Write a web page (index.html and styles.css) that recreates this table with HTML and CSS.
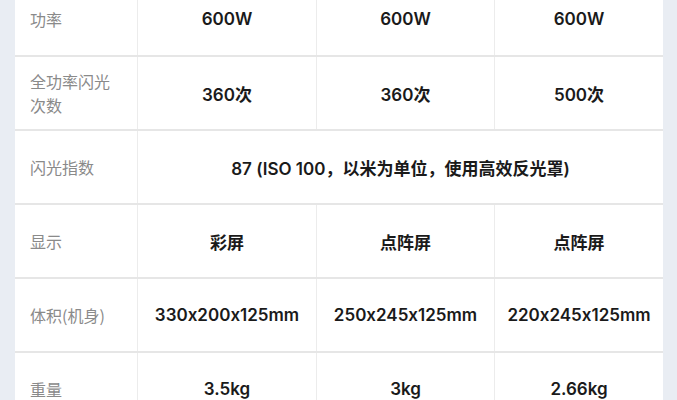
FILE: index.html
```html
<!DOCTYPE html>
<html lang="zh-CN">
<head>
<meta charset="utf-8">
<link rel="stylesheet" href="styles.css">
</head>
<body>
<div class="page">
  <div class="card">
    <div class="row">
      <div class="cell label">功率</div>
      <div class="cell val">600W</div>
      <div class="cell val">600W</div>
      <div class="cell val last">600W</div>
    </div>
    <div class="row">
      <div class="cell label">全功率闪光<br>次数</div>
      <div class="cell val">360次</div>
      <div class="cell val">360次</div>
      <div class="cell val last">500次</div>
    </div>
    <div class="row">
      <div class="cell label">闪光指数</div>
      <div class="cell val span3 last">87 (ISO 100，以米为单位，使用高效反光罩)</div>
    </div>
    <div class="row">
      <div class="cell label">显示</div>
      <div class="cell val">彩屏</div>
      <div class="cell val">点阵屏</div>
      <div class="cell val last">点阵屏</div>
    </div>
    <div class="row">
      <div class="cell label">体积(机身)</div>
      <div class="cell val">330x200x125mm</div>
      <div class="cell val">250x245x125mm</div>
      <div class="cell val last">220x245x125mm</div>
    </div>
    <div class="row">
      <div class="cell label">重量</div>
      <div class="cell val">3.5kg</div>
      <div class="cell val">3kg</div>
      <div class="cell val last">2.66kg</div>
    </div>
  </div>
</div>
</body>
</html>
```
FILE: styles.css
```css
html, body {
  margin: 0;
  padding: 0;
  background: #e9edf3;
  overflow: hidden;
}
.page {
  width: 677px;
  height: 400px;
  overflow: hidden;
  padding: 0 14px 0 15px;
  box-sizing: border-box;
}
.card {
  background: #ffffff;
  margin-top: -17px;
  font-family: Inter, "Noto Sans CJK SC", sans-serif;
  font-feature-settings: "calt" 0;
}
.row {
  display: grid;
  grid-template-columns: 123px 179px 178px 168px;
  height: 74px;
  border-bottom: 2px solid #e6e6e6;
  box-sizing: border-box;
}
.cell {
  display: flex;
  align-items: center;
  border-right: 1px solid #ececec;
}
.cell.last {
  border-right: none;
}
.label {
  padding-left: 15px;
  font-size: 16px;
  line-height: 24px;
  color: #8a8a8a;
  font-family: "Noto Sans CJK SC", sans-serif;
}
.val {
  justify-content: center;
  font-size: 17px;
  font-weight: 600;
  color: #1a1a1a;
}
.span3 {
  grid-column: 2 / 5;
}
```
